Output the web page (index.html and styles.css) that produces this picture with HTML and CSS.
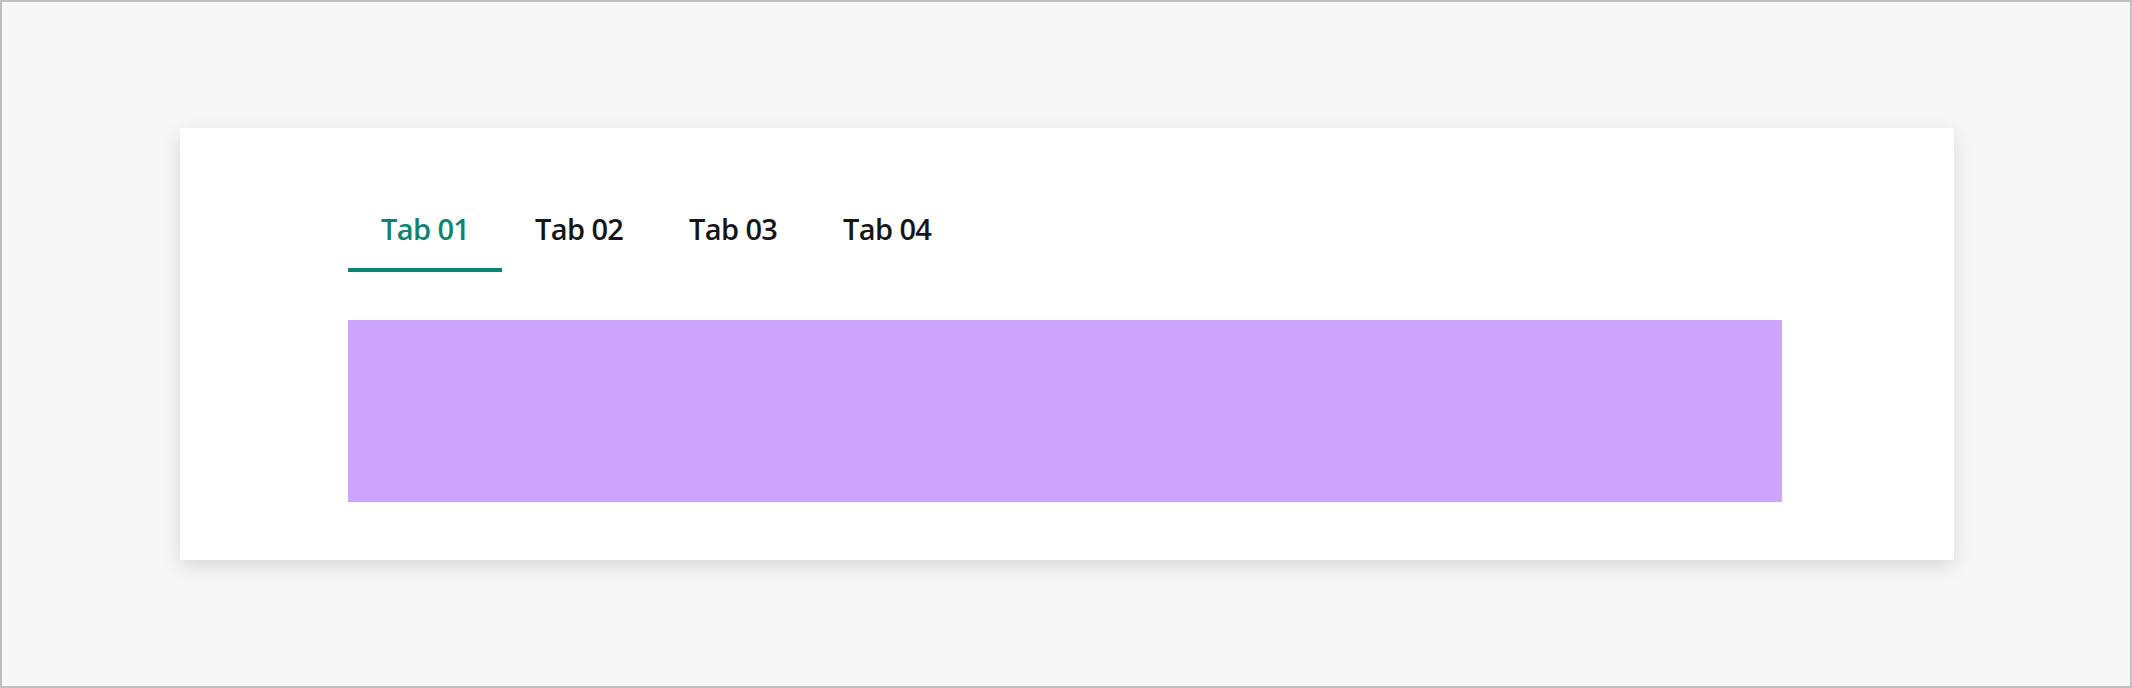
FILE: index.html
```html
<!DOCTYPE html>
<html lang="en">
<head>
<meta charset="utf-8">
<title>Tabs</title>
<link rel="stylesheet" href="styles.css">
</head>
<body>
<div class="frame">
  <div class="card">
    <div class="tabs" role="tablist">
      <div class="tab tab--active" role="tab">Tab 01</div>
      <div class="tab" role="tab">Tab 02</div>
      <div class="tab" role="tab">Tab 03</div>
      <div class="tab" role="tab">Tab 04</div>
    </div>
    <div class="panel"></div>
  </div>
</div>
</body>
</html>
```

FILE: styles.css
```css
html, body {
  margin: 0;
  padding: 0;
}

body {
  font-family: "Open Sans", "Noto Sans", sans-serif;
}

.frame {
  box-sizing: border-box;
  width: 2132px;
  height: 688px;
  border: 2px solid #c1bebe;
  background: #f7f7f7;
  padding: 126px 176px 126px 178px;
}

.card {
  box-sizing: border-box;
  height: 432px;
  background: #ffffff;
  box-shadow: 0 6px 18px rgba(0, 0, 0, 0.13);
  padding: 64px 172px 58px 168px;
  display: flex;
  flex-direction: column;
  gap: 48px;
}

.tabs {
  display: flex;
  height: 80px;
}

.tab {
  box-sizing: border-box;
  width: 154px;
  height: 80px;
  padding: 0 0 3px 33px;
  display: flex;
  align-items: center;
  font-size: 29px;
  font-weight: 600;
  letter-spacing: -0.6px;
  color: #161616;
  border-bottom: 4px solid transparent;
}

.tab--active {
  color: #0f8274;
  border-bottom-color: #0f8274;
}

.panel {
  height: 182px;
  background: #cda4fe;
}
```
